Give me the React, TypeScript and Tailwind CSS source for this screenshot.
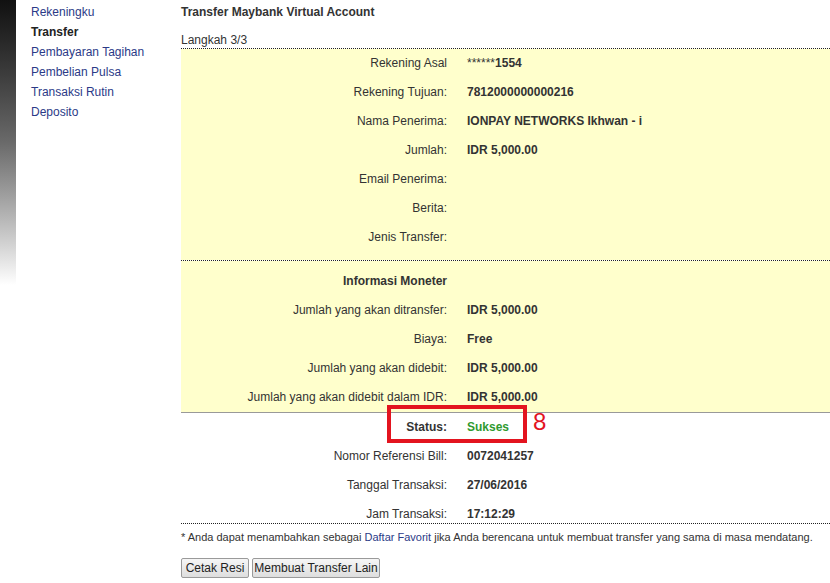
import React from "react";

type Row = { label: string; value?: React.ReactNode; bold?: boolean };

const infoRows: Row[] = [
  { label: "Rekening Asal", value: (<><span className="font-normal">******</span>1554</>) },
  { label: "Rekening Tujuan:", value: "7812000000000216" },
  { label: "Nama Penerima:", value: "IONPAY NETWORKS Ikhwan - i" },
  { label: "Jumlah:", value: "IDR 5,000.00" },
  { label: "Email Penerima:" },
  { label: "Berita:" },
  { label: "Jenis Transfer:" },
];

const moneyRows: Row[] = [
  { label: "Informasi Moneter", bold: true },
  { label: "Jumlah yang akan ditransfer:", value: "IDR 5,000.00" },
  { label: "Biaya:", value: "Free" },
  { label: "Jumlah yang akan didebit:", value: "IDR 5,000.00" },
  { label: "Jumlah yang akan didebit dalam IDR:", value: "IDR 5,000.00" },
];

const resultRows: Row[] = [
  { label: "Nomor Referensi Bill:", value: "0072041257" },
  { label: "Tanggal Transaksi:", value: "27/06/2016" },
  { label: "Jam Transaksi:", value: "17:12:29" },
];

const DetailRow = ({ row, last }: { row: Row; last?: boolean }) => (
  <div className={`flex leading-[15px] ${last ? "pt-[7px]" : "py-[7px]"}`}>
    <div className={`w-[266px] shrink-0 text-right ${row.bold ? "font-bold" : ""}`}>{row.label}</div>
    <div className="pl-[20px] font-bold">{row.value}</div>
  </div>
);

const sideMenu = ["Rekeningku", "Transfer", "Pembayaran Tagihan", "Pembelian Pulsa", "Transaksi Rutin", "Deposito"];

export default function App() {
  return (
    <div className="flex w-[830px] h-[583px] overflow-hidden bg-white text-[12px] text-[#333] font-['Liberation_Sans',Arial,sans-serif]">
      <div className="w-[16px] h-[285px] shrink-0 bg-gradient-to-b from-[#111] via-[#6a6a6a] to-white" />
      <nav className="w-[165px] shrink-0 pl-[15px] pt-[2px]">
        <ul className="leading-[20px]">
          {sideMenu.map((item) => (
            <li key={item} className={item === "Transfer" ? "font-bold text-[#222]" : "text-[#2b3a87]"}>
              {item}
            </li>
          ))}
        </ul>
      </nav>
      <main className="flex-1 min-w-0">
        <h1 className="font-bold leading-[15px] pt-[5px]">Transfer Maybank Virtual Account</h1>
        <div className="leading-[15px] pt-[13px]">Langkah 3/3</div>
        <div className="border-t border-dotted border-[#222]" />
        <section className="bg-[#ffffcc] pb-[8px]">
          {infoRows.map((r) => (
            <DetailRow key={r.label} row={r} />
          ))}
        </section>
        <div className="border-t border-dotted border-[#222]" />
        <section className="bg-[#ffffcc] pt-[6px]">
          {moneyRows.map((r) => (
            <DetailRow key={r.label} row={r} />
          ))}
        </section>
        <div className="border-t border-[#999]" />
        <section>
          <div className="relative flex leading-[15px] py-[7px]">
            <div className="w-[266px] shrink-0 text-right font-bold">Status:</div>
            <div className="pl-[20px] font-bold text-[#2f9a2f]">Sukses</div>
            <div className="absolute left-[206px] top-[-8px] w-[140px] h-[38px] border-[4px] border-[#e3141f]" />
            <div className="absolute left-[352px] top-[-3px] text-[24px] leading-[24px] text-[#e3141f]">8</div>
          </div>
          {resultRows.map((r, i) => (
            <DetailRow key={r.label} row={r} last={i === resultRows.length - 1} />
          ))}
        </section>
        <div className="mt-[1px] border-t border-dotted border-[#222]" />
        <p className="leading-[15px] pt-[6px] text-[11px]">
          * Anda dapat menambahkan sebagai <span className="text-[#2b3a87]">Daftar Favorit</span> jika Anda berencana untuk membuat transfer yang sama di masa mendatang.
        </p>
        <div className="flex gap-[3px] pt-[13px]">
          <button className="h-[20px] w-[68px] border border-[#9a9a9a] rounded-[2px] bg-gradient-to-b from-[#f6f6f6] to-[#dedede] text-[12px] text-[#222]">
            Cetak Resi
          </button>
          <button className="h-[20px] w-[128px] border border-[#9a9a9a] rounded-[2px] bg-gradient-to-b from-[#f6f6f6] to-[#dedede] text-[12px] text-[#222]">
            Membuat Transfer Lain
          </button>
        </div>
      </main>
    </div>
  );
}
